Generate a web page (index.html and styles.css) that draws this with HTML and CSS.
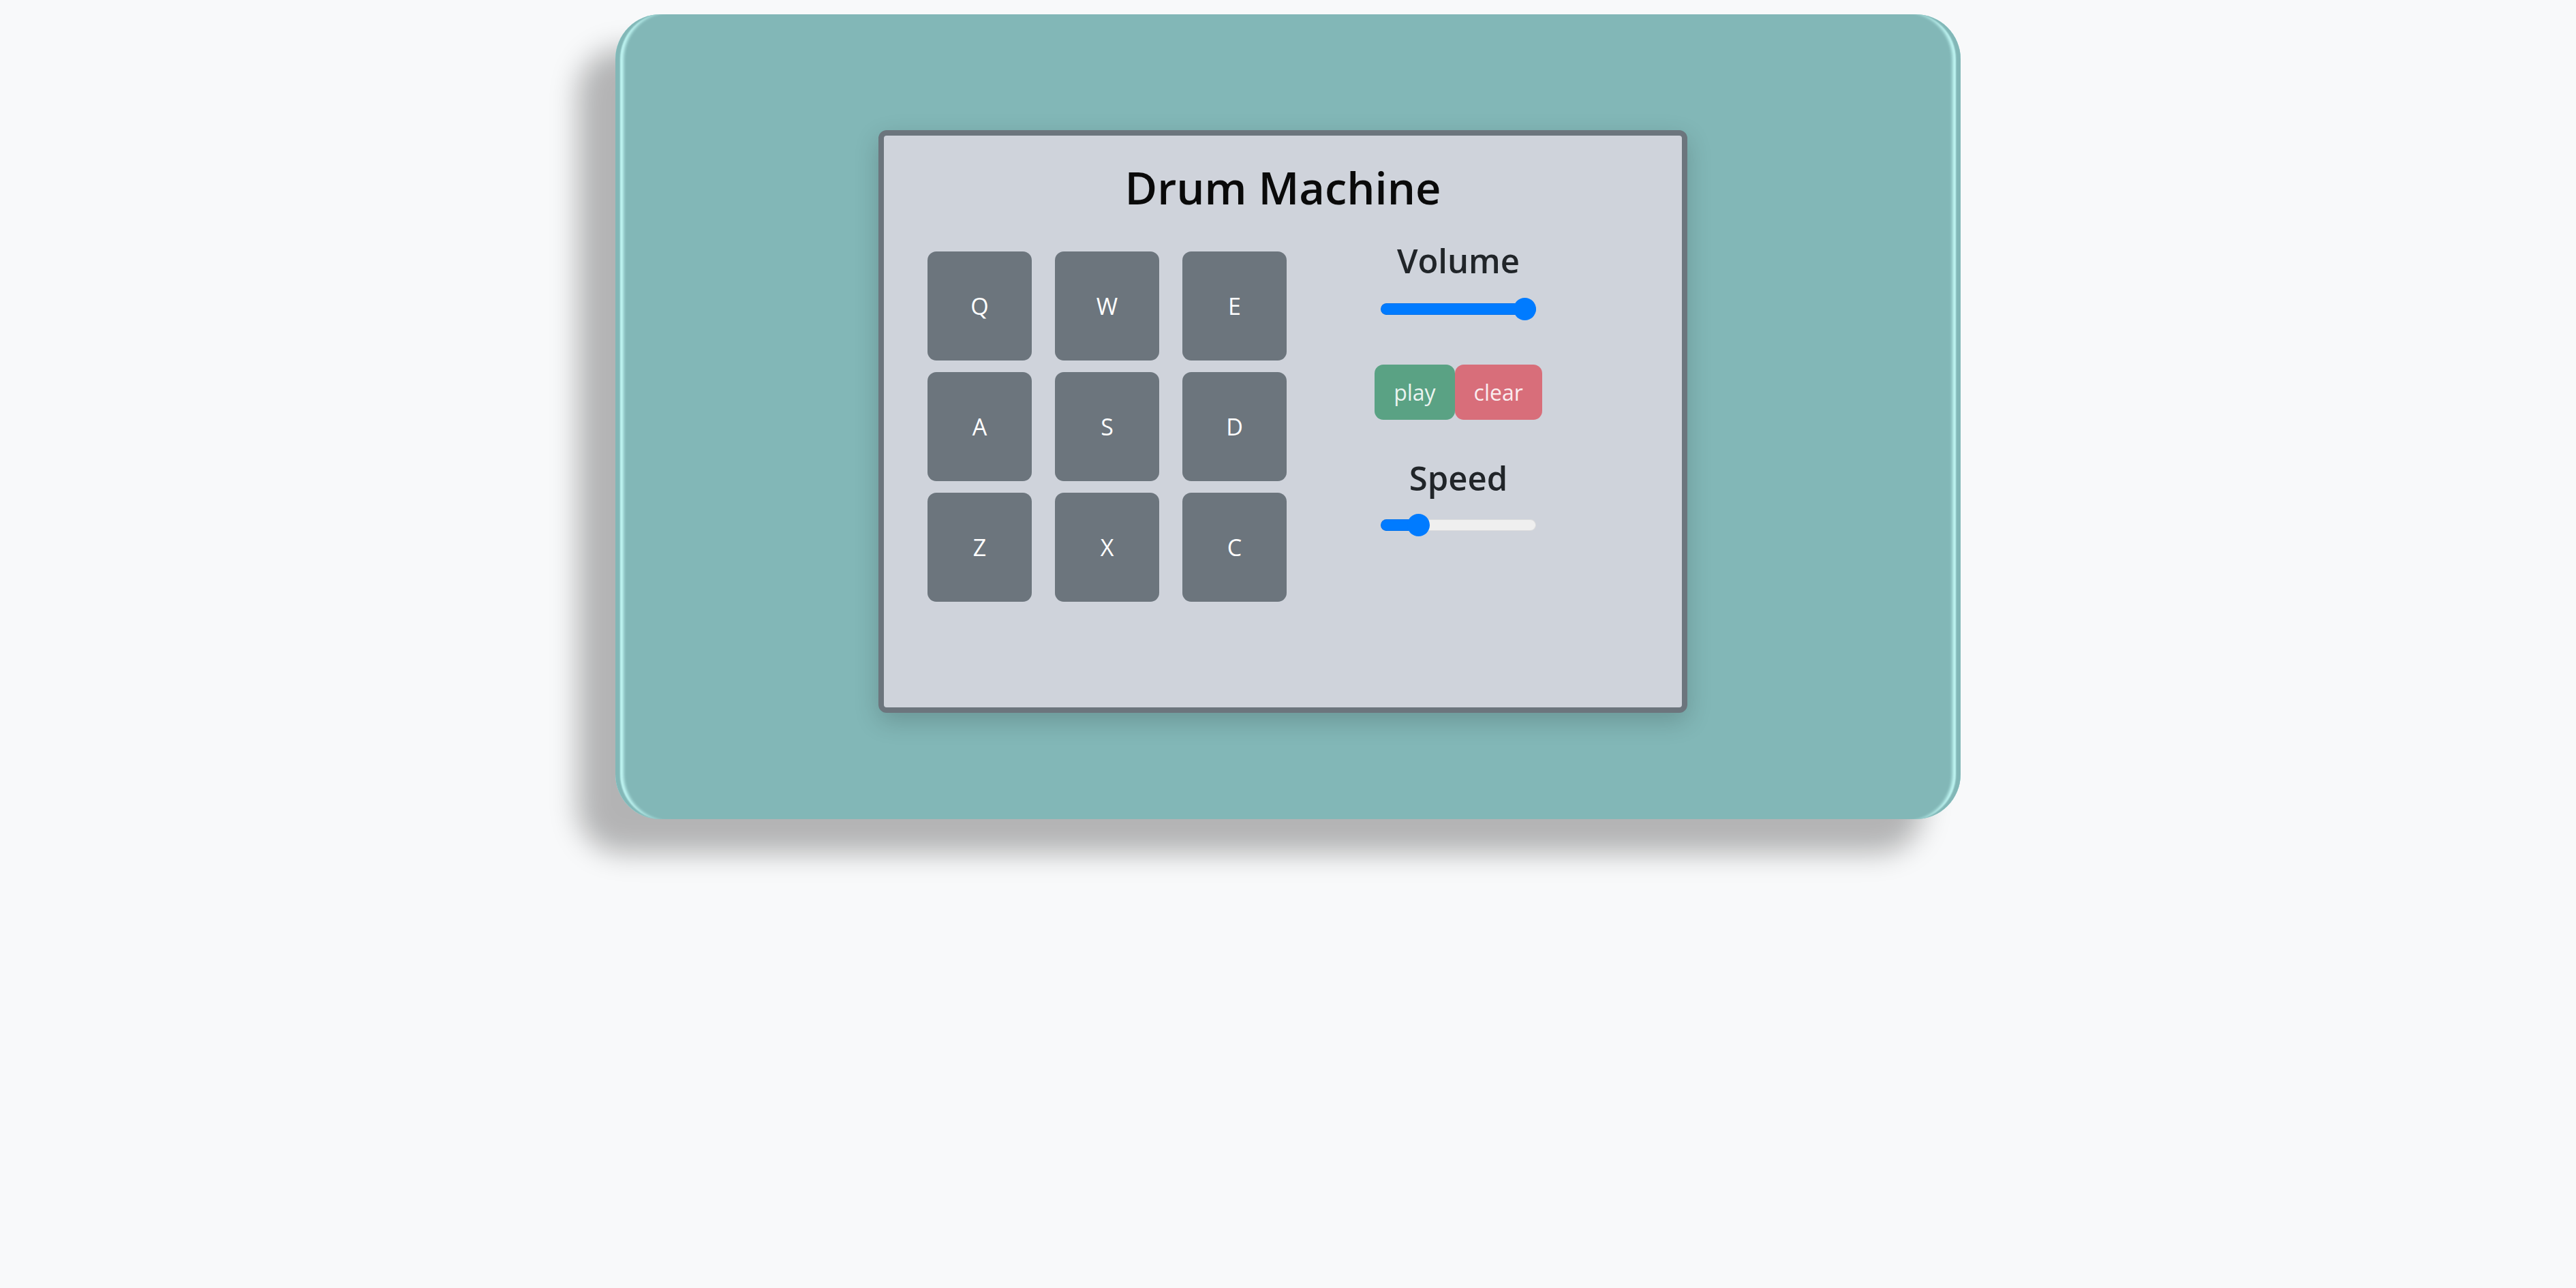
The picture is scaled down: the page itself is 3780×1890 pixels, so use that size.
FILE: index.html
```html
<!DOCTYPE html>
<html lang="en">
<head>
<meta charset="utf-8">
<title>Drum Machine</title>
<link rel="stylesheet" href="styles.css">
</head>
<body>
  <div class="card">
    <div class="panel">
      <h1 class="title">Drum Machine</h1>
      <div class="main">
        <div class="pads">
          <button class="pad">Q</button>
          <button class="pad">W</button>
          <button class="pad">E</button>
          <button class="pad">A</button>
          <button class="pad">S</button>
          <button class="pad">D</button>
          <button class="pad">Z</button>
          <button class="pad">X</button>
          <button class="pad">C</button>
        </div>
        <div class="controls">
          <h3 class="label">Volume</h3>
          <input class="range range-volume" type="range" min="0" max="100" value="100" style="--fill: 100%">
          <div class="actions">
            <button class="btn btn-play">play</button>
            <button class="btn btn-clear">clear</button>
          </div>
          <h3 class="label label-speed">Speed</h3>
          <input class="range range-speed" type="range" min="0" max="100" value="20" style="--fill: 24%">
        </div>
      </div>
    </div>
  </div>
</body>
</html>
```

FILE: styles.css
```css
html, body {
  margin: 0;
  padding: 0;
}

body {
  background: #f8f9fa;
  font-family: "Open Sans", "Noto Sans", "Liberation Sans", sans-serif;
  padding-top: 21px;
  min-height: 1890px;
  box-sizing: border-box;
}

.card {
  width: 1974px;
  height: 1181px;
  margin: 0 auto;
  box-sizing: border-box;
  padding-top: 170px;
  padding-left: 386px;
  border-radius: 66px;
  background: #82b7b7;
  box-shadow:
    inset 9px 0 2px -2px #82b7b7,
    inset -9px 0 2px -2px #82b7b7,
    inset 16px 0 4px -4px #c2f8f5,
    inset -16px 0 4px -4px #c2f8f5,
    -55px 50px 40px rgba(0, 0, 0, 0.28);
}

.panel {
  width: 1187px;
  height: 855px;
  box-sizing: border-box;
  border: 8px solid #6c757d;
  border-radius: 12px;
  background: #cfd3db;
  padding-top: 37px;
  box-shadow: 0 12px 36px rgba(0, 0, 0, 0.18);
}

.title {
  margin: 0;
  text-align: center;
  font-size: 65px;
  line-height: 1.23;
  font-weight: 600;
  color: #0a0a0a;
}

.main {
  display: flex;
  align-items: flex-start;
  padding-left: 64px;
  margin-top: 53px;
}

.pads {
  display: grid;
  grid-template-columns: repeat(3, 153px);
  grid-auto-rows: 160px;
  column-gap: 34px;
  row-gap: 17px;
}

.pad {
  display: flex;
  align-items: center;
  justify-content: center;
  border: none;
  border-radius: 13px;
  background: #6c757d;
  color: #ffffff;
  font-family: "Open Sans", "Noto Sans", "Liberation Sans", sans-serif;
  font-size: 34px;
  padding: 0;
}

.controls {
  width: 260px;
  margin-left: 122px;
  margin-top: -17px;
  display: flex;
  flex-direction: column;
  align-items: center;
}

.label {
  margin: 0;
  font-size: 49px;
  line-height: 1.25;
  font-weight: 600;
  color: #212529;
}

.label-speed {
  margin-top: 55px;
}

.range {
  -webkit-appearance: none;
  appearance: none;
  width: 228px;
  height: 33px;
  margin: 0;
  padding: 0;
  background: transparent;
}

.range-volume {
  margin-top: 24px;
}

.range-speed {
  margin-top: 22px;
}

.range::-webkit-slider-runnable-track {
  height: 17px;
  border-radius: 9px;
  background: linear-gradient(to right, #007bff var(--fill), #efefef var(--fill));
  box-shadow: inset 0 0 0 1px rgba(0, 0, 0, 0.08);
}

.range::-webkit-slider-thumb {
  -webkit-appearance: none;
  appearance: none;
  width: 33px;
  height: 33px;
  margin-top: -8px;
  border-radius: 50%;
  background: #007bff;
  border: none;
}

.actions {
  display: flex;
  margin-top: 65px;
}

.btn {
  border: none;
  border-radius: 13px;
  height: 81px;
  padding: 0 28px;
  font-family: "Open Sans", "Noto Sans", "Liberation Sans", sans-serif;
  font-size: 32px;
  line-height: 1.5;
  color: rgba(255, 255, 255, 0.9);
}

.btn-play {
  background: #5aa284;
}

.btn-clear {
  background: #d86e7a;
}
```
